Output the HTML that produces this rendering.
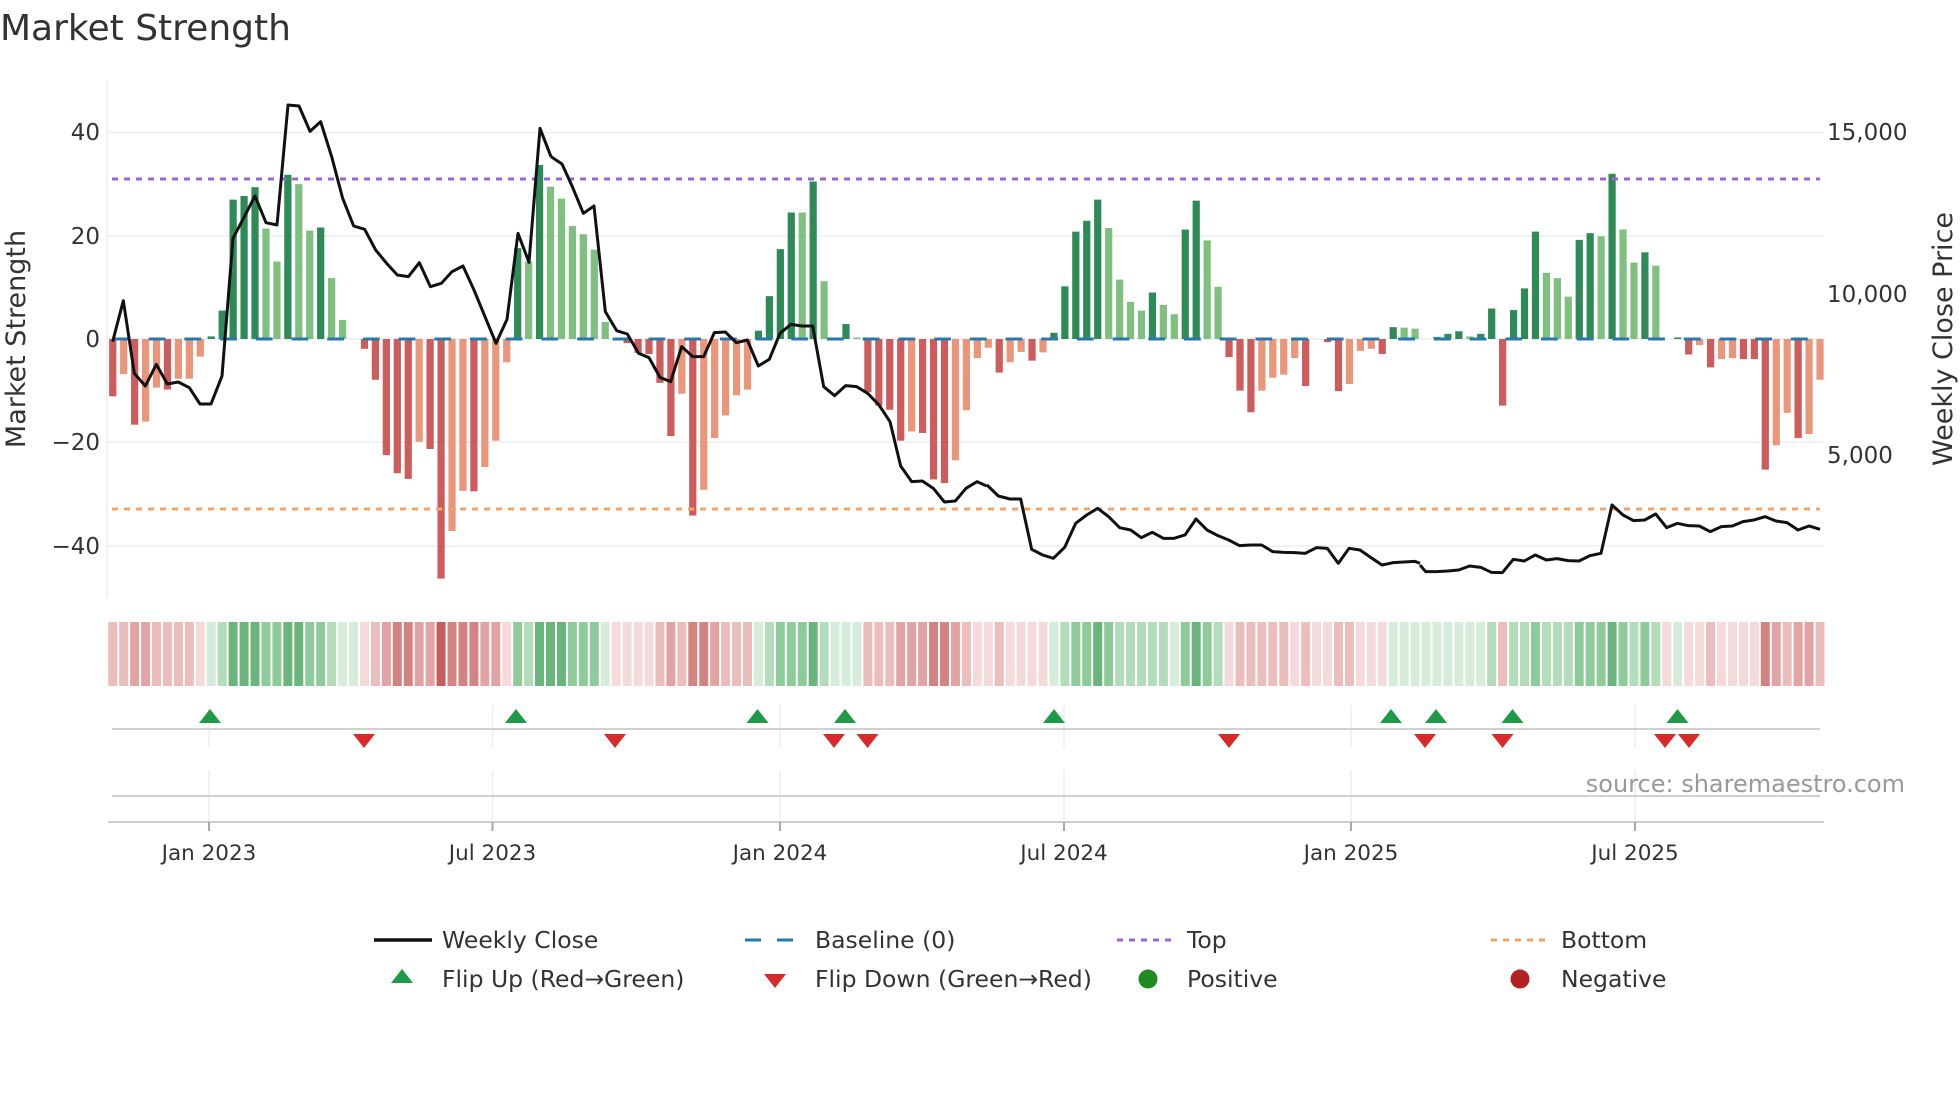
<!DOCTYPE html>
<html><head><meta charset="utf-8"><style>
html,body{margin:0;padding:0;background:#fff;}
svg{display:block;font-family:"DejaVu Sans","Liberation Sans",sans-serif;}
.a{fill:#2e8b57}.b{fill:#7fbf7f}.c{fill:#cd5c5c}.d{fill:#e9967a}
.g1{fill:#d6ecdb}.g2{fill:#b3dcba}.g3{fill:#8fcb9a}.g4{fill:#69b57c}
.r1{fill:#f4dada}.r2{fill:#ebbdbd}.r3{fill:#e1a3a3}.r4{fill:#d48383}.r5{fill:#c65e5e}
.t{fill:#333}
</style></head><body>
<svg width="1960" height="1102" viewBox="0 0 1960 1102" xmlns="http://www.w3.org/2000/svg">
<rect width="1960" height="1102" fill="#fff"/>
<text x="0" y="40" font-size="36" class="t">Market Strength</text>

<g stroke="#ebeef4" stroke-width="1.5">
<line x1="107" y1="132.5" x2="1824" y2="132.5"/>
<line x1="107" y1="236" x2="1824" y2="236"/>
<line x1="107" y1="339" x2="1824" y2="339"/>
<line x1="107" y1="442" x2="1824" y2="442"/>
<line x1="107" y1="546" x2="1824" y2="546"/>
<line x1="107" y1="81" x2="107" y2="598"/>
</g>
<g font-size="23" class="t" text-anchor="end">
<text x="100" y="140">40</text><text x="100" y="244">20</text><text x="100" y="347">0</text>
<text x="100" y="450">−20</text><text x="100" y="554">−40</text>
</g>
<g font-size="23" class="t">
<text x="1827" y="140">15,000</text><text x="1827" y="302">10,000</text><text x="1827" y="463">5,000</text>
</g>
<text transform="translate(25,339) rotate(-90)" font-size="27" class="t" text-anchor="middle">Market Strength</text>
<text transform="translate(1952,339) rotate(-90)" font-size="27" class="t" text-anchor="middle">Weekly Close Price</text>

<g transform="translate(112.75,339) scale(10.944,-5.1625)">
<rect class="c" x="-.33" y="-11.1" width=".66" height="11.1"/>
<rect class="d" x=".67" y="-6.8" width=".66" height="6.8"/>
<rect class="c" x="1.67" y="-16.6" width=".66" height="16.6"/>
<rect class="d" x="2.67" y="-16" width=".66" height="16"/>
<rect class="d" x="3.67" y="-9.4" width=".66" height="9.4"/>
<rect class="c" x="4.67" y="-9.8" width=".66" height="9.8"/>
<rect class="d" x="5.67" y="-7.7" width=".66" height="7.7"/>
<rect class="d" x="6.67" y="-7.7" width=".66" height="7.7"/>
<rect class="d" x="7.67" y="-3.4" width=".66" height="3.4"/>
<rect class="a" x="8.67" y="0" width=".66" height=".5"/>
<rect class="a" x="9.67" y="0" width=".66" height="5.5"/>
<rect class="a" x="10.67" y="0" width=".66" height="27"/>
<rect class="a" x="11.67" y="0" width=".66" height="27.7"/>
<rect class="a" x="12.67" y="0" width=".66" height="29.4"/>
<rect class="b" x="13.67" y="0" width=".66" height="21.4"/>
<rect class="b" x="14.67" y="0" width=".66" height="15"/>
<rect class="a" x="15.67" y="0" width=".66" height="31.8"/>
<rect class="b" x="16.67" y="0" width=".66" height="30"/>
<rect class="b" x="17.67" y="0" width=".66" height="21"/>
<rect class="a" x="18.67" y="0" width=".66" height="21.6"/>
<rect class="b" x="19.67" y="0" width=".66" height="11.8"/>
<rect class="b" x="20.67" y="0" width=".66" height="3.7"/>
<rect class="c" x="22.67" y="-1.9" width=".66" height="1.9"/>
<rect class="c" x="23.67" y="-7.9" width=".66" height="7.9"/>
<rect class="c" x="24.67" y="-22.5" width=".66" height="22.5"/>
<rect class="c" x="25.67" y="-26" width=".66" height="26"/>
<rect class="c" x="26.67" y="-27.1" width=".66" height="27.1"/>
<rect class="d" x="27.67" y="-19.9" width=".66" height="19.9"/>
<rect class="c" x="28.67" y="-21.3" width=".66" height="21.3"/>
<rect class="c" x="29.67" y="-46.4" width=".66" height="46.4"/>
<rect class="d" x="30.67" y="-37.2" width=".66" height="37.2"/>
<rect class="d" x="31.67" y="-29.4" width=".66" height="29.4"/>
<rect class="c" x="32.67" y="-29.5" width=".66" height="29.5"/>
<rect class="d" x="33.67" y="-24.8" width=".66" height="24.8"/>
<rect class="d" x="34.67" y="-19.7" width=".66" height="19.7"/>
<rect class="d" x="35.67" y="-4.5" width=".66" height="4.5"/>
<rect class="a" x="36.67" y="0" width=".66" height="17.6"/>
<rect class="b" x="37.67" y="0" width=".66" height="15"/>
<rect class="a" x="38.67" y="0" width=".66" height="33.7"/>
<rect class="b" x="39.67" y="0" width=".66" height="29.5"/>
<rect class="b" x="40.67" y="0" width=".66" height="27.2"/>
<rect class="b" x="41.67" y="0" width=".66" height="21.9"/>
<rect class="b" x="42.67" y="0" width=".66" height="20.3"/>
<rect class="b" x="43.67" y="0" width=".66" height="17.3"/>
<rect class="b" x="44.67" y="0" width=".66" height="3.3"/>
<rect class="c" x="45.67" y="-.3" width=".66" height=".3"/>
<rect class="c" x="46.67" y="-.8" width=".66" height=".8"/>
<rect class="c" x="47.67" y="-2.7" width=".66" height="2.7"/>
<rect class="c" x="48.67" y="-2.9" width=".66" height="2.9"/>
<rect class="c" x="49.67" y="-8.5" width=".66" height="8.5"/>
<rect class="c" x="50.67" y="-18.8" width=".66" height="18.8"/>
<rect class="d" x="51.67" y="-10.6" width=".66" height="10.6"/>
<rect class="c" x="52.67" y="-34.2" width=".66" height="34.2"/>
<rect class="d" x="53.67" y="-29.2" width=".66" height="29.2"/>
<rect class="d" x="54.67" y="-19.2" width=".66" height="19.2"/>
<rect class="d" x="55.67" y="-14.8" width=".66" height="14.8"/>
<rect class="d" x="56.67" y="-10.9" width=".66" height="10.9"/>
<rect class="d" x="57.67" y="-9.8" width=".66" height="9.8"/>
<rect class="a" x="58.67" y="0" width=".66" height="1.6"/>
<rect class="a" x="59.67" y="0" width=".66" height="8.3"/>
<rect class="a" x="60.67" y="0" width=".66" height="17.4"/>
<rect class="a" x="61.67" y="0" width=".66" height="24.5"/>
<rect class="b" x="62.67" y="0" width=".66" height="24.5"/>
<rect class="a" x="63.67" y="0" width=".66" height="30.5"/>
<rect class="b" x="64.67" y="0" width=".66" height="11.2"/>
<rect class="a" x="66.67" y="0" width=".66" height="2.9"/>
<rect class="b" x="67.67" y="0" width=".66" height=".3"/>
<rect class="c" x="68.67" y="-10.3" width=".66" height="10.3"/>
<rect class="c" x="69.67" y="-12.9" width=".66" height="12.9"/>
<rect class="c" x="70.67" y="-13.7" width=".66" height="13.7"/>
<rect class="c" x="71.67" y="-19.7" width=".66" height="19.7"/>
<rect class="d" x="72.67" y="-17.9" width=".66" height="17.9"/>
<rect class="c" x="73.67" y="-18.2" width=".66" height="18.2"/>
<rect class="c" x="74.67" y="-27.2" width=".66" height="27.2"/>
<rect class="c" x="75.67" y="-27.9" width=".66" height="27.9"/>
<rect class="d" x="76.67" y="-23.5" width=".66" height="23.5"/>
<rect class="d" x="77.67" y="-13.8" width=".66" height="13.8"/>
<rect class="d" x="78.67" y="-3.7" width=".66" height="3.7"/>
<rect class="d" x="79.67" y="-1.7" width=".66" height="1.7"/>
<rect class="c" x="80.67" y="-6.5" width=".66" height="6.5"/>
<rect class="d" x="81.67" y="-4.5" width=".66" height="4.5"/>
<rect class="d" x="82.67" y="-2.5" width=".66" height="2.5"/>
<rect class="c" x="83.67" y="-4.2" width=".66" height="4.2"/>
<rect class="d" x="84.67" y="-2.6" width=".66" height="2.6"/>
<rect class="a" x="85.67" y="0" width=".66" height="1.2"/>
<rect class="a" x="86.67" y="0" width=".66" height="10.2"/>
<rect class="a" x="87.67" y="0" width=".66" height="20.8"/>
<rect class="a" x="88.67" y="0" width=".66" height="22.9"/>
<rect class="a" x="89.67" y="0" width=".66" height="27"/>
<rect class="b" x="90.67" y="0" width=".66" height="21.5"/>
<rect class="b" x="91.67" y="0" width=".66" height="11.5"/>
<rect class="b" x="92.67" y="0" width=".66" height="7.2"/>
<rect class="b" x="93.67" y="0" width=".66" height="5.5"/>
<rect class="a" x="94.67" y="0" width=".66" height="9"/>
<rect class="b" x="95.67" y="0" width=".66" height="6.6"/>
<rect class="b" x="96.67" y="0" width=".66" height="4.8"/>
<rect class="a" x="97.67" y="0" width=".66" height="21.2"/>
<rect class="a" x="98.67" y="0" width=".66" height="26.8"/>
<rect class="b" x="99.67" y="0" width=".66" height="19.1"/>
<rect class="b" x="100.67" y="0" width=".66" height="10.1"/>
<rect class="c" x="101.67" y="-3.5" width=".66" height="3.5"/>
<rect class="c" x="102.67" y="-10" width=".66" height="10"/>
<rect class="c" x="103.67" y="-14.2" width=".66" height="14.2"/>
<rect class="d" x="104.67" y="-10" width=".66" height="10"/>
<rect class="d" x="105.67" y="-7.5" width=".66" height="7.5"/>
<rect class="d" x="106.67" y="-6.9" width=".66" height="6.9"/>
<rect class="d" x="107.67" y="-3.7" width=".66" height="3.7"/>
<rect class="c" x="108.67" y="-9.1" width=".66" height="9.1"/>
<rect class="c" x="110.67" y="-.6" width=".66" height=".6"/>
<rect class="c" x="111.67" y="-10.1" width=".66" height="10.1"/>
<rect class="d" x="112.67" y="-8.7" width=".66" height="8.7"/>
<rect class="d" x="113.67" y="-2.3" width=".66" height="2.3"/>
<rect class="d" x="114.67" y="-1.9" width=".66" height="1.9"/>
<rect class="c" x="115.67" y="-2.9" width=".66" height="2.9"/>
<rect class="a" x="116.67" y="0" width=".66" height="2.3"/>
<rect class="b" x="117.67" y="0" width=".66" height="2.2"/>
<rect class="b" x="118.67" y="0" width=".66" height="2"/>
<rect class="a" x="120.67" y="0" width=".66" height=".4"/>
<rect class="a" x="121.67" y="0" width=".66" height="1"/>
<rect class="a" x="122.67" y="0" width=".66" height="1.5"/>
<rect class="b" x="123.67" y="0" width=".66" height=".5"/>
<rect class="a" x="124.67" y="0" width=".66" height="1"/>
<rect class="a" x="125.67" y="0" width=".66" height="5.9"/>
<rect class="c" x="126.67" y="-12.9" width=".66" height="12.9"/>
<rect class="a" x="127.67" y="0" width=".66" height="5.6"/>
<rect class="a" x="128.67" y="0" width=".66" height="9.8"/>
<rect class="a" x="129.67" y="0" width=".66" height="20.8"/>
<rect class="b" x="130.67" y="0" width=".66" height="12.8"/>
<rect class="b" x="131.67" y="0" width=".66" height="11.8"/>
<rect class="b" x="132.67" y="0" width=".66" height="8.2"/>
<rect class="a" x="133.67" y="0" width=".66" height="19.2"/>
<rect class="a" x="134.67" y="0" width=".66" height="20.5"/>
<rect class="b" x="135.67" y="0" width=".66" height="19.9"/>
<rect class="a" x="136.67" y="0" width=".66" height="32"/>
<rect class="b" x="137.67" y="0" width=".66" height="21.2"/>
<rect class="b" x="138.67" y="0" width=".66" height="14.8"/>
<rect class="a" x="139.67" y="0" width=".66" height="16.8"/>
<rect class="b" x="140.67" y="0" width=".66" height="14.2"/>
<rect class="a" x="142.67" y="0" width=".66" height=".3"/>
<rect class="c" x="143.67" y="-3" width=".66" height="3"/>
<rect class="d" x="144.67" y="-1.2" width=".66" height="1.2"/>
<rect class="c" x="145.67" y="-5.5" width=".66" height="5.5"/>
<rect class="d" x="146.67" y="-3.9" width=".66" height="3.9"/>
<rect class="d" x="147.67" y="-3.7" width=".66" height="3.7"/>
<rect class="c" x="148.67" y="-3.9" width=".66" height="3.9"/>
<rect class="c" x="149.67" y="-3.9" width=".66" height="3.9"/>
<rect class="c" x="150.67" y="-25.3" width=".66" height="25.3"/>
<rect class="d" x="151.67" y="-20.6" width=".66" height="20.6"/>
<rect class="d" x="152.67" y="-14.3" width=".66" height="14.3"/>
<rect class="c" x="153.67" y="-19.2" width=".66" height="19.2"/>
<rect class="d" x="154.67" y="-18.4" width=".66" height="18.4"/>
<rect class="d" x="155.67" y="-7.9" width=".66" height="7.9"/>
</g>

<line x1="112" y1="339" x2="1822" y2="339" stroke="#2878b0" stroke-width="3" stroke-dasharray="16.8 18.9" stroke-dashoffset="-1"/>
<line x1="112" y1="179" x2="1820" y2="179" stroke="#9d63d4" stroke-width="3" stroke-dasharray="6 6"/>
<line x1="112" y1="509" x2="1820" y2="509" stroke="#f2a466" stroke-width="3" stroke-dasharray="6 6"/>

<g fill="none" stroke="#111" stroke-width="3" stroke-linejoin="round">
<polyline vector-effect="non-scaling-stroke" transform="translate(100,90) scale(0.33333)" points="38,755 70,632 103,850 136,888 169,823 202,882 235,876 268,893 300,942 333,942 366,858 399,445 432,382 465,318 498,398 531,405 564,45 597,48 630,124 662,95 695,200 728,325 761,408 794,418 827,480 860,520 892,555 925,560 958,518 991,590 1024,580 1056,545 1089,528 1122,600 1155,680 1188,760 1221,688 1254,430 1287,517 1320,115 1353,200"/>
<polyline vector-effect="non-scaling-stroke" transform="translate(540,90) scale(0.33333)" points="33,200 66,222 97,290 130,370 162,348 196,665 230,722 262,732 296,790 327,803 360,862 392,875 425,770 458,800 491,800 523,728 556,726 589,758 622,750 655,828 688,808 720,730 753,703 786,708 818,708 851,890 884,917 917,887 950,890 983,910 1017,945 1050,995 1082,1128 1115,1175 1147,1173 1180,1195 1213,1236 1246,1233 1278,1195 1311,1175 1340,1188"/>
<polyline vector-effect="non-scaling-stroke" transform="translate(980,90) scale(0.33333)" points="21,1185 55,1218 90,1227 122,1227 155,1378 188,1395 220,1405 254,1372 287,1300 320,1275 353,1255 386,1280 419,1313 452,1320 484,1343 517,1327 550,1345 582,1345 615,1335 648,1287 681,1320 714,1337 746,1350 779,1367 812,1365 845,1365 878,1385 911,1387 944,1388 976,1390 1009,1373 1042,1375 1075,1420 1107,1375 1140,1380 1173,1403 1206,1425 1239,1418 1272,1416 1304,1414 1320,1420"/>
<polyline vector-effect="non-scaling-stroke" transform="translate(1420,90) scale(0.33333)" points="0,1425 17,1445 50,1445 83,1443 116,1440 149,1428 182,1432 214,1447 247,1448 280,1408 313,1413 346,1395 379,1410 411,1406 444,1412 477,1413 510,1397 543,1390 576,1245 609,1275 641,1292 674,1290 707,1272 740,1313 772,1300 805,1307 838,1308 871,1325 904,1310 937,1308 969,1295 1002,1290 1035,1280 1068,1293 1101,1298 1134,1320 1167,1308 1200,1318"/>
</g>

<g transform="translate(112.75,622) scale(10.944,64)">
<rect class="r2" x="-.41" width=".82" height="1"/><rect class="r2" x=".59" width=".82" height="1"/><rect class="r3" x="1.59" width=".82" height="1"/><rect class="r3" x="2.59" width=".82" height="1"/><rect class="r2" x="3.59" width=".82" height="1"/><rect class="r2" x="4.59" width=".82" height="1"/><rect class="r2" x="5.59" width=".82" height="1"/><rect class="r2" x="6.59" width=".82" height="1"/><rect class="r1" x="7.59" width=".82" height="1"/><rect class="g1" x="8.59" width=".82" height="1"/>
<rect class="g2" x="9.59" width=".82" height="1"/><rect class="g4" x="10.59" width=".82" height="1"/><rect class="g4" x="11.59" width=".82" height="1"/><rect class="g4" x="12.59" width=".82" height="1"/><rect class="g3" x="13.59" width=".82" height="1"/><rect class="g3" x="14.59" width=".82" height="1"/><rect class="g4" x="15.59" width=".82" height="1"/><rect class="g4" x="16.59" width=".82" height="1"/><rect class="g3" x="17.59" width=".82" height="1"/><rect class="g3" x="18.59" width=".82" height="1"/>
<rect class="g2" x="19.59" width=".82" height="1"/><rect class="g1" x="20.59" width=".82" height="1"/><rect class="g1" x="21.59" width=".82" height="1"/><rect class="r1" x="22.59" width=".82" height="1"/><rect class="r2" x="23.59" width=".82" height="1"/><rect class="r3" x="24.59" width=".82" height="1"/><rect class="r4" x="25.59" width=".82" height="1"/><rect class="r4" x="26.59" width=".82" height="1"/><rect class="r3" x="27.59" width=".82" height="1"/><rect class="r3" x="28.59" width=".82" height="1"/>
<rect class="r5" x="29.59" width=".82" height="1"/><rect class="r4" x="30.59" width=".82" height="1"/><rect class="r4" x="31.59" width=".82" height="1"/><rect class="r4" x="32.59" width=".82" height="1"/><rect class="r3" x="33.59" width=".82" height="1"/><rect class="r3" x="34.59" width=".82" height="1"/><rect class="r1" x="35.59" width=".82" height="1"/><rect class="g3" x="36.59" width=".82" height="1"/><rect class="g2" x="37.59" width=".82" height="1"/><rect class="g4" x="38.59" width=".82" height="1"/>
<rect class="g4" x="39.59" width=".82" height="1"/><rect class="g4" x="40.59" width=".82" height="1"/><rect class="g3" x="41.59" width=".82" height="1"/><rect class="g3" x="42.59" width=".82" height="1"/><rect class="g3" x="43.59" width=".82" height="1"/><rect class="g1" x="44.59" width=".82" height="1"/><rect class="r1" x="45.59" width=".82" height="1"/><rect class="r1" x="46.59" width=".82" height="1"/><rect class="r1" x="47.59" width=".82" height="1"/><rect class="r1" x="48.59" width=".82" height="1"/>
<rect class="r2" x="49.59" width=".82" height="1"/><rect class="r3" x="50.59" width=".82" height="1"/><rect class="r2" x="51.59" width=".82" height="1"/><rect class="r4" x="52.59" width=".82" height="1"/><rect class="r4" x="53.59" width=".82" height="1"/><rect class="r3" x="54.59" width=".82" height="1"/><rect class="r2" x="55.59" width=".82" height="1"/><rect class="r2" x="56.59" width=".82" height="1"/><rect class="r2" x="57.59" width=".82" height="1"/><rect class="g1" x="58.59" width=".82" height="1"/>
<rect class="g2" x="59.59" width=".82" height="1"/><rect class="g3" x="60.59" width=".82" height="1"/><rect class="g3" x="61.59" width=".82" height="1"/><rect class="g3" x="62.59" width=".82" height="1"/><rect class="g4" x="63.59" width=".82" height="1"/><rect class="g2" x="64.59" width=".82" height="1"/><rect class="g1" x="65.59" width=".82" height="1"/><rect class="g1" x="66.59" width=".82" height="1"/><rect class="g1" x="67.59" width=".82" height="1"/><rect class="r2" x="68.59" width=".82" height="1"/>
<rect class="r2" x="69.59" width=".82" height="1"/><rect class="r2" x="70.59" width=".82" height="1"/><rect class="r3" x="71.59" width=".82" height="1"/><rect class="r3" x="72.59" width=".82" height="1"/><rect class="r3" x="73.59" width=".82" height="1"/><rect class="r4" x="74.59" width=".82" height="1"/><rect class="r4" x="75.59" width=".82" height="1"/><rect class="r3" x="76.59" width=".82" height="1"/><rect class="r2" x="77.59" width=".82" height="1"/><rect class="r1" x="78.59" width=".82" height="1"/>
<rect class="r1" x="79.59" width=".82" height="1"/><rect class="r2" x="80.59" width=".82" height="1"/><rect class="r1" x="81.59" width=".82" height="1"/><rect class="r1" x="82.59" width=".82" height="1"/><rect class="r1" x="83.59" width=".82" height="1"/><rect class="r1" x="84.59" width=".82" height="1"/><rect class="g1" x="85.59" width=".82" height="1"/><rect class="g2" x="86.59" width=".82" height="1"/><rect class="g3" x="87.59" width=".82" height="1"/><rect class="g3" x="88.59" width=".82" height="1"/>
<rect class="g4" x="89.59" width=".82" height="1"/><rect class="g3" x="90.59" width=".82" height="1"/><rect class="g2" x="91.59" width=".82" height="1"/><rect class="g2" x="92.59" width=".82" height="1"/><rect class="g2" x="93.59" width=".82" height="1"/><rect class="g2" x="94.59" width=".82" height="1"/><rect class="g2" x="95.59" width=".82" height="1"/><rect class="g1" x="96.59" width=".82" height="1"/><rect class="g3" x="97.59" width=".82" height="1"/><rect class="g4" x="98.59" width=".82" height="1"/>
<rect class="g3" x="99.59" width=".82" height="1"/><rect class="g2" x="100.59" width=".82" height="1"/><rect class="r1" x="101.59" width=".82" height="1"/><rect class="r2" x="102.59" width=".82" height="1"/><rect class="r2" x="103.59" width=".82" height="1"/><rect class="r2" x="104.59" width=".82" height="1"/><rect class="r2" x="105.59" width=".82" height="1"/><rect class="r2" x="106.59" width=".82" height="1"/><rect class="r1" x="107.59" width=".82" height="1"/><rect class="r2" x="108.59" width=".82" height="1"/>
<rect class="r1" x="109.59" width=".82" height="1"/><rect class="r1" x="110.59" width=".82" height="1"/><rect class="r2" x="111.59" width=".82" height="1"/><rect class="r2" x="112.59" width=".82" height="1"/><rect class="r1" x="113.59" width=".82" height="1"/><rect class="r1" x="114.59" width=".82" height="1"/><rect class="r1" x="115.59" width=".82" height="1"/><rect class="g1" x="116.59" width=".82" height="1"/><rect class="g1" x="117.59" width=".82" height="1"/><rect class="g1" x="118.59" width=".82" height="1"/>
<rect class="g1" x="119.59" width=".82" height="1"/><rect class="g1" x="120.59" width=".82" height="1"/><rect class="g1" x="121.59" width=".82" height="1"/><rect class="g1" x="122.59" width=".82" height="1"/><rect class="g1" x="123.59" width=".82" height="1"/><rect class="g1" x="124.59" width=".82" height="1"/><rect class="g2" x="125.59" width=".82" height="1"/><rect class="r2" x="126.59" width=".82" height="1"/><rect class="g2" x="127.59" width=".82" height="1"/><rect class="g2" x="128.59" width=".82" height="1"/>
<rect class="g3" x="129.59" width=".82" height="1"/><rect class="g2" x="130.59" width=".82" height="1"/><rect class="g2" x="131.59" width=".82" height="1"/><rect class="g2" x="132.59" width=".82" height="1"/><rect class="g3" x="133.59" width=".82" height="1"/><rect class="g3" x="134.59" width=".82" height="1"/><rect class="g3" x="135.59" width=".82" height="1"/><rect class="g4" x="136.59" width=".82" height="1"/><rect class="g3" x="137.59" width=".82" height="1"/><rect class="g2" x="138.59" width=".82" height="1"/>
<rect class="g3" x="139.59" width=".82" height="1"/><rect class="g2" x="140.59" width=".82" height="1"/><rect class="r1" x="141.59" width=".82" height="1"/><rect class="g1" x="142.59" width=".82" height="1"/><rect class="r1" x="143.59" width=".82" height="1"/><rect class="r1" x="144.59" width=".82" height="1"/><rect class="r2" x="145.59" width=".82" height="1"/><rect class="r1" x="146.59" width=".82" height="1"/><rect class="r1" x="147.59" width=".82" height="1"/><rect class="r1" x="148.59" width=".82" height="1"/>
<rect class="r1" x="149.59" width=".82" height="1"/><rect class="r4" x="150.59" width=".82" height="1"/><rect class="r3" x="151.59" width=".82" height="1"/><rect class="r2" x="152.59" width=".82" height="1"/><rect class="r3" x="153.59" width=".82" height="1"/><rect class="r3" x="154.59" width=".82" height="1"/><rect class="r2" x="155.59" width=".82" height="1"/>
</g>

<g stroke="#eceef2" stroke-width="1.5">
<line x1="209" y1="705" x2="209" y2="748"/><line x1="492.5" y1="705" x2="492.5" y2="748"/><line x1="780" y1="705" x2="780" y2="748"/><line x1="1064" y1="705" x2="1064" y2="748"/><line x1="1351" y1="705" x2="1351" y2="748"/><line x1="1635" y1="705" x2="1635" y2="748"/>
<line x1="209" y1="770" x2="209" y2="822"/><line x1="492.5" y1="770" x2="492.5" y2="822"/><line x1="780" y1="770" x2="780" y2="822"/><line x1="1064" y1="770" x2="1064" y2="822"/><line x1="1351" y1="770" x2="1351" y2="822"/><line x1="1635" y1="770" x2="1635" y2="822"/>
</g>
<line x1="112" y1="729" x2="1820" y2="729" stroke="#d0d0d0" stroke-width="2"/>
<line x1="112" y1="796" x2="1820" y2="796" stroke="#d0d0d0" stroke-width="2"/>
<line x1="108" y1="822" x2="1824" y2="822" stroke="#cccccc" stroke-width="2"/>
<g stroke="#aaa" stroke-width="2">
<line x1="209" y1="822" x2="209" y2="831"/><line x1="492.5" y1="822" x2="492.5" y2="831"/><line x1="780" y1="822" x2="780" y2="831"/><line x1="1064" y1="822" x2="1064" y2="831"/><line x1="1351" y1="822" x2="1351" y2="831"/><line x1="1635" y1="822" x2="1635" y2="831"/>
</g>
<g fill="#1f9a48">
<path d="M210 709l11 14h-22z"/><path d="M516 709l11 14h-22z"/><path d="M757.5 709l11 14h-22z"/><path d="M845 709l11 14h-22z"/><path d="M1054 709l11 14h-22z"/><path d="M1391 709l11 14h-22z"/><path d="M1436 709l11 14h-22z"/><path d="M1512.5 709l11 14h-22z"/><path d="M1677.5 709l11 14h-22z"/>
</g>
<g fill="#d92a2a">
<path d="M364 748l11-14h-22z"/><path d="M615 748l11-14h-22z"/><path d="M834 748l11-14h-22z"/><path d="M867.5 748l11-14h-22z"/><path d="M1229 748l11-14h-22z"/><path d="M1425 748l11-14h-22z"/><path d="M1502.5 748l11-14h-22z"/><path d="M1665 748l11-14h-22z"/><path d="M1689 748l11-14h-22z"/>
</g>
<text x="1905" y="792" font-size="24" fill="#999" text-anchor="end">source: sharemaestro.com</text>

<g font-size="21.5" class="t" text-anchor="middle">
<text x="209" y="860">Jan 2023</text><text x="492.5" y="860">Jul 2023</text><text x="780" y="860">Jan 2024</text><text x="1064" y="860">Jul 2024</text><text x="1351" y="860">Jan 2025</text><text x="1635" y="860">Jul 2025</text>
</g>

<line x1="374" y1="940" x2="432" y2="940" stroke="#111" stroke-width="3.5"/>
<line x1="745" y1="940" x2="800" y2="940" stroke="#2878b0" stroke-width="3" stroke-dasharray="16 16"/>
<line x1="1117" y1="940" x2="1174" y2="940" stroke="#9d63d4" stroke-width="3" stroke-dasharray="6 6"/>
<line x1="1491" y1="940" x2="1546" y2="940" stroke="#f2a466" stroke-width="3" stroke-dasharray="6 6"/>
<path d="M402 969l11 14h-22z" fill="#1f9a48"/>
<path d="M775 988l11-14h-22z" fill="#d92a2a"/>
<circle cx="1148" cy="979" r="9.5" fill="#218a21"/>
<circle cx="1520" cy="979" r="9.5" fill="#b22222"/>
<g font-size="23.5" class="t">
<text x="442" y="948">Weekly Close</text><text x="815" y="948">Baseline (0)</text><text x="1187" y="948">Top</text><text x="1561" y="948">Bottom</text>
<text x="442" y="987">Flip Up (Red→Green)</text><text x="815" y="987">Flip Down (Green→Red)</text><text x="1187" y="987">Positive</text><text x="1561" y="987">Negative</text>
</g>
</svg>
</body></html>
